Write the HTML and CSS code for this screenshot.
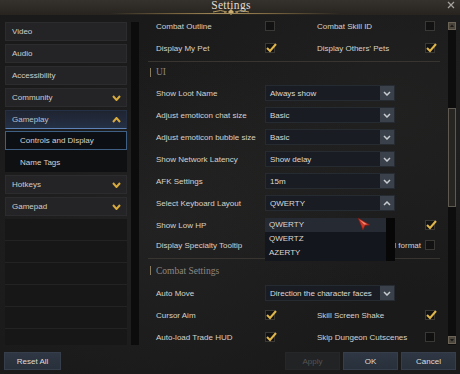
FILE: index.html
```html
<!DOCTYPE html>
<html lang="en">

<head>
    <meta charset="UTF-8">
    <meta name="viewport" content="width=device-width, initial-scale=1.0">
    <title>Settings</title>
    <link rel="stylesheet" href="styles.css">
</head>

<body>
    <div class="window">
        <header class="titlebar">
            <h1 class="title">Settings</h1>
            <svg class="ornament" width="40" height="8" viewBox="0 0 40 8">
                <path d="M2 4 Q10 1 16 4 M38 4 Q30 1 24 4" stroke="#b49a62" stroke-width="1" fill="none" />
                <path d="M20 1 L23 4 L20 7 L17 4 Z" fill="#c9ad70" />
                <circle cx="14" cy="5" r="1" fill="#b49a62" />
                <circle cx="26" cy="5" r="1" fill="#b49a62" />
            </svg>
            <svg class="close" width="8" height="8" viewBox="0 0 8 8">
                <path d="M1 1 L7 7 M7 1 L1 7" stroke="#a6a39e" stroke-width="1.2" />
            </svg>
        </header>

        <div class="main">
            <nav class="sidebar">
                <div class="menu">
                    <div class="menu-item">Video</div>
                    <div class="menu-item">Audio</div>
                    <div class="menu-item">Accessibility</div>
                    <div class="menu-item">Community
                        <svg class="chev" width="9" height="6" viewBox="0 0 9 6"><path d="M1 1 L4.5 5 L8 1" /></svg>
                    </div>
                    <div class="menu-item open">Gameplay
                        <svg class="chev" width="9" height="6" viewBox="0 0 9 6"><path d="M1 5 L4.5 1 L8 5" /></svg>
                    </div>
                    <div class="submenu">
                        <div class="menu-sub active">Controls and Display</div>
                        <div class="menu-sub">Name Tags</div>
                    </div>
                    <div class="menu-item">Hotkeys
                        <svg class="chev" width="9" height="6" viewBox="0 0 9 6"><path d="M1 1 L4.5 5 L8 1" /></svg>
                    </div>
                    <div class="menu-item">Gamepad
                        <svg class="chev" width="9" height="6" viewBox="0 0 9 6"><path d="M1 1 L4.5 5 L8 1" /></svg>
                    </div>
                    <div class="menu-empty"></div>
                    <div class="menu-empty"></div>
                    <div class="menu-empty"></div>
                    <div class="menu-empty"></div>
                    <div class="menu-empty"></div>
                    <div class="menu-empty"></div>
                </div>
                <div class="track"></div>
            </nav>

            <section class="content">
                <div class="row">
                    <span>Combat Outline</span>
                    <span class="check"></span>
                    <span>Combat Skill ID</span>
                    <span class="check"></span>
                </div>
                <div class="row">
                    <span>Display My Pet</span>
                    <span class="check on"><svg width="12" height="10" viewBox="0 0 12 10"><path d="M2 5 L5 8 L11 1" /></svg></span>
                    <span>Display Others' Pets</span>
                    <span class="check on"><svg width="12" height="10" viewBox="0 0 12 10"><path d="M2 5 L5 8 L11 1" /></svg></span>
                </div>

                <div class="divider"></div>
                <h2 class="section">UI</h2>

                <div class="row select">
                    <span>Show Loot Name</span>
                    <div class="dropdown"><span>Always show</span>
                        <b class="arrow"><svg width="8" height="5" viewBox="0 0 8 5"><path d="M1 1 L4 4 L7 1" /></svg></b>
                    </div>
                </div>
                <div class="row select">
                    <span>Adjust emoticon chat size</span>
                    <div class="dropdown"><span>Basic</span>
                        <b class="arrow"><svg width="8" height="5" viewBox="0 0 8 5"><path d="M1 1 L4 4 L7 1" /></svg></b>
                    </div>
                </div>
                <div class="row select">
                    <span>Adjust emoticon bubble size</span>
                    <div class="dropdown"><span>Basic</span>
                        <b class="arrow"><svg width="8" height="5" viewBox="0 0 8 5"><path d="M1 1 L4 4 L7 1" /></svg></b>
                    </div>
                </div>
                <div class="row select">
                    <span>Show Network Latency</span>
                    <div class="dropdown"><span>Show delay</span>
                        <b class="arrow"><svg width="8" height="5" viewBox="0 0 8 5"><path d="M1 1 L4 4 L7 1" /></svg></b>
                    </div>
                </div>
                <div class="row select">
                    <span>AFK Settings</span>
                    <div class="dropdown"><span>15m</span>
                        <b class="arrow"><svg width="8" height="5" viewBox="0 0 8 5"><path d="M1 1 L4 4 L7 1" /></svg></b>
                    </div>
                </div>
                <div class="row select">
                    <span>Select Keyboard Layout</span>
                    <div class="dropdown open"><span>QWERTY</span>
                        <b class="arrow"><svg width="8" height="5" viewBox="0 0 8 5"><path d="M1 4 L4 1 L7 4" /></svg></b>
                        <ul class="options">
                            <li class="hover">QWERTY</li>
                            <li>QWERTZ</li>
                            <li>AZERTY</li>
                        </ul>
                        <svg class="cursor" width="14" height="14" viewBox="0 0 14 14">
                            <path d="M1 1 L13 8 L8 8.5 L6 13 Z" fill="#c9362a" stroke="#7a1a12" stroke-width="0.6" />
                            <path d="M2.5 2.5 L10 7.2 L7 7.5 Z" fill="#f08a70" />
                        </svg>
                    </div>
                </div>
                <div class="row">
                    <span>Show Low HP</span>
                    <span></span>
                    <span></span>
                    <span class="check on"><svg width="12" height="10" viewBox="0 0 12 10"><path d="M2 5 L5 8 L11 1" /></svg></span>
                </div>
                <div class="row short">
                    <span>Display Specialty Tooltip</span>
                    <span></span>
                    <span>Display in the Decimal format</span>
                    <span class="check"></span>
                </div>

                <div class="divider wide"></div>
                <h2 class="section tall">Combat Settings</h2>

                <div class="row select">
                    <span>Auto Move</span>
                    <div class="dropdown"><span>Direction the character faces</span>
                        <b class="arrow"><svg width="8" height="5" viewBox="0 0 8 5"><path d="M1 1 L4 4 L7 1" /></svg></b>
                    </div>
                </div>
                <div class="row">
                    <span>Cursor Aim</span>
                    <span class="check on"><svg width="12" height="10" viewBox="0 0 12 10"><path d="M2 5 L5 8 L11 1" /></svg></span>
                    <span>Skill Screen Shake</span>
                    <span class="check on"><svg width="12" height="10" viewBox="0 0 12 10"><path d="M2 5 L5 8 L11 1" /></svg></span>
                </div>
                <div class="row">
                    <span>Auto-load Trade HUD</span>
                    <span class="check on"><svg width="12" height="10" viewBox="0 0 12 10"><path d="M2 5 L5 8 L11 1" /></svg></span>
                    <span>Skip Dungeon Cutscenes</span>
                    <span class="check"></span>
                </div>
            </section>

            <div class="scrollbar">
                <span class="sb-btn"><svg width="6" height="6" viewBox="0 0 6 6"><path d="M1 4 L3 1.5 L5 4 Z" /></svg></span>
                <span class="sb-thumb"></span>
                <span class="sb-btn bottom"><svg width="6" height="6" viewBox="0 0 6 6"><path d="M1 2 L3 4.5 L5 2 Z" /></svg></span>
            </div>
        </div>

        <footer class="footer">
            <button class="btn">Reset All</button>
            <div class="actions">
                <button class="btn disabled">Apply</button>
                <button class="btn">OK</button>
                <button class="btn">Cancel</button>
            </div>
        </footer>
    </div>
</body>

</html>
```

FILE: styles.css
```css
* {
    box-sizing: border-box;
}

body {
    margin: 0;
    background-color: #141414;
    font-family: 'Liberation Sans', Arial, sans-serif;
    font-size: 8px;
    color: #d6d2ca;
}

.window {
    width: 460px;
    height: 374px;
    overflow: hidden;
    display: flex;
    flex-direction: column;
    background:
        radial-gradient(ellipse at 35% 60%, rgba(60, 58, 55, 0.25), transparent 55%),
        radial-gradient(ellipse at 85% 30%, rgba(50, 48, 44, 0.3), transparent 50%),
        #1a1a1b;
}

/* title */
.titlebar {
    position: relative;
    height: 15px;
    flex-shrink: 0;
    display: flex;
    justify-content: center;
    background: linear-gradient(#35322e, #27241f);
}

.titlebar::after {
    content: "";
    position: absolute;
    left: 110px;
    right: 120px;
    bottom: 1px;
    height: 1px;
    background: linear-gradient(90deg, transparent, #7a6640 30%, #a88f5c 50%, #7a6640 70%, transparent);
}

.title {
    margin: 0 0 0 2px;
    font-family: 'Liberation Serif', 'Times New Roman', serif;
    font-weight: normal;
    font-size: 11.5px;
    line-height: 11px;
    color: #e2dccf;
    letter-spacing: 0.3px;
}

.ornament {
    position: absolute;
    left: 211px;
    top: 8px;
}

.close {
    position: absolute;
    right: 5px;
    top: 1px;
}

/* layout */
.main {
    flex: 1;
    display: flex;
    min-height: 0;
}

.sidebar {
    display: flex;
    gap: 4px;
    margin-left: 5px;
    padding-top: 7px;
}

.menu {
    width: 122px;
    height: 323px;
    overflow: hidden;
}

.menu-item {
    height: 19px;
    margin-bottom: 3px;
    display: flex;
    align-items: center;
    justify-content: space-between;
    padding: 0 5px 0 6px;
    background-color: #242426;
    border: 1px solid #2c2c2e;
    color: #cfcdca;
}

.menu-item .chev path {
    fill: none;
    stroke: #d8aa3c;
    stroke-width: 2;
}

.menu-item.open {
    margin-bottom: 2px;
    background: linear-gradient(#1f2430, #243045);
    border-color: #263045;
    border-bottom: 1px solid #5d82b6;
    color: #b9c1cd;
}

.submenu {
    background-color: #0f1012;
    margin-bottom: 3px;
}

.menu-sub {
    height: 20px;
    display: flex;
    align-items: center;
    padding-left: 14px;
    border: 1px solid transparent;
    color: #d4d2cf;
}

.menu-sub.active {
    height: 19px;
    margin-bottom: 2px;
    background-color: #0c0f13;
    border-color: #3f5f84;
}

.menu-empty {
    height: 22px;
    background-color: #171718;
    border-bottom: 1px solid #232324;
}

.track {
    width: 8px;
    height: 323px;
    background-color: #0c0c0c;
}

.content {
    width: 295px;
    margin-left: 9px;
    overflow: hidden;
}

.row {
    display: grid;
    grid-template-columns: 109px 52px 108px 12px;
    align-items: center;
    height: 22px;
    padding-left: 8px;
    white-space: nowrap;
}

.row.short {
    height: 18px;
}

.row.select {
    grid-template-columns: 109px 130px;
}

.check {
    position: relative;
    width: 10px;
    height: 10px;
    border: 1px solid #3a3835;
    background-color: rgba(0, 0, 0, 0.35);
}

.check svg {
    position: absolute;
    left: -1px;
    top: -1px;
}

.check svg path {
    fill: none;
    stroke: #e0b64a;
    stroke-width: 2;
}

.divider {
    height: 1px;
    margin: 2px 3px 0 0;
    background-color: #383530;
}

.divider.wide {
    margin-top: 4px;
}

.section {
    height: 20px;
    margin: 0;
    display: flex;
    align-items: center;
    padding-left: 2px;
    font-family: 'Liberation Serif', 'Times New Roman', serif;
    font-weight: normal;
    font-size: 9.5px;
    color: #8d8881;
}

.section::before {
    content: "";
    width: 1px;
    height: 9px;
    margin-right: 5px;
    background-color: #8a7c60;
}

.section.tall {
    height: 23px;
}

.dropdown {
    position: relative;
    height: 16px;
    display: flex;
    align-items: center;
    justify-content: space-between;
    padding-left: 4px;
    background-color: #191c23;
    border: 1px solid #262a31;
    color: #dcdad6;
}

.arrow {
    width: 14px;
    height: 14px;
    display: flex;
    align-items: center;
    justify-content: center;
    background-color: #3a414b;
}

.arrow path {
    fill: none;
    stroke: #c8ccd0;
    stroke-width: 1.5;
}

.options {
    position: absolute;
    left: -1px;
    top: 22px;
    width: 130px;
    height: 43px;
    margin: 0;
    padding: 0 9px 0 0;
    list-style: none;
    background:
        linear-gradient(90deg, transparent 121px, #070707 121px),
        #13161c;
    z-index: 2;
}

.options li {
    height: 14px;
    line-height: 14px;
    padding-left: 4px;
    color: #d8d8d8;
}

.options li.hover {
    background-color: #252a33;
}

.cursor {
    position: absolute;
    left: 91px;
    top: 21px;
    z-index: 3;
}

.scrollbar {
    width: 8px;
    height: 323px;
    margin: 7px 0 0 5px;
    display: flex;
    flex-direction: column;
    background-color: #0d0d0d;
}

.sb-btn {
    height: 8px;
    display: flex;
    align-items: center;
    justify-content: center;
    background-color: #4a453d;
    border: 1px solid #6b6456;
}

.sb-btn path {
    fill: #1a1814;
}

.sb-btn.bottom {
    margin-top: auto;
    margin-bottom: 1px;
}

.sb-thumb {
    height: 99px;
    margin-top: 78px;
    background-color: #262522;
    border: 1px solid #5e5a52;
}

/* footer */
.footer {
    height: 27px;
    flex-shrink: 0;
    display: flex;
    justify-content: space-between;
    padding: 5px 4px 0 4px;
}

.actions {
    display: flex;
    gap: 3px;
}

.btn {
    height: 18px;
    width: 55px;
    padding: 0;
    font-family: inherit;
    font-size: 8px;
    color: #dedcd8;
    background: linear-gradient(#2f3744, #28303b);
    border: 1px solid #353e4a;
}

.footer > .btn {
    width: 57px;
}

.btn.disabled {
    color: #555452;
    background: #222325;
    border-color: #262729;
}
```
